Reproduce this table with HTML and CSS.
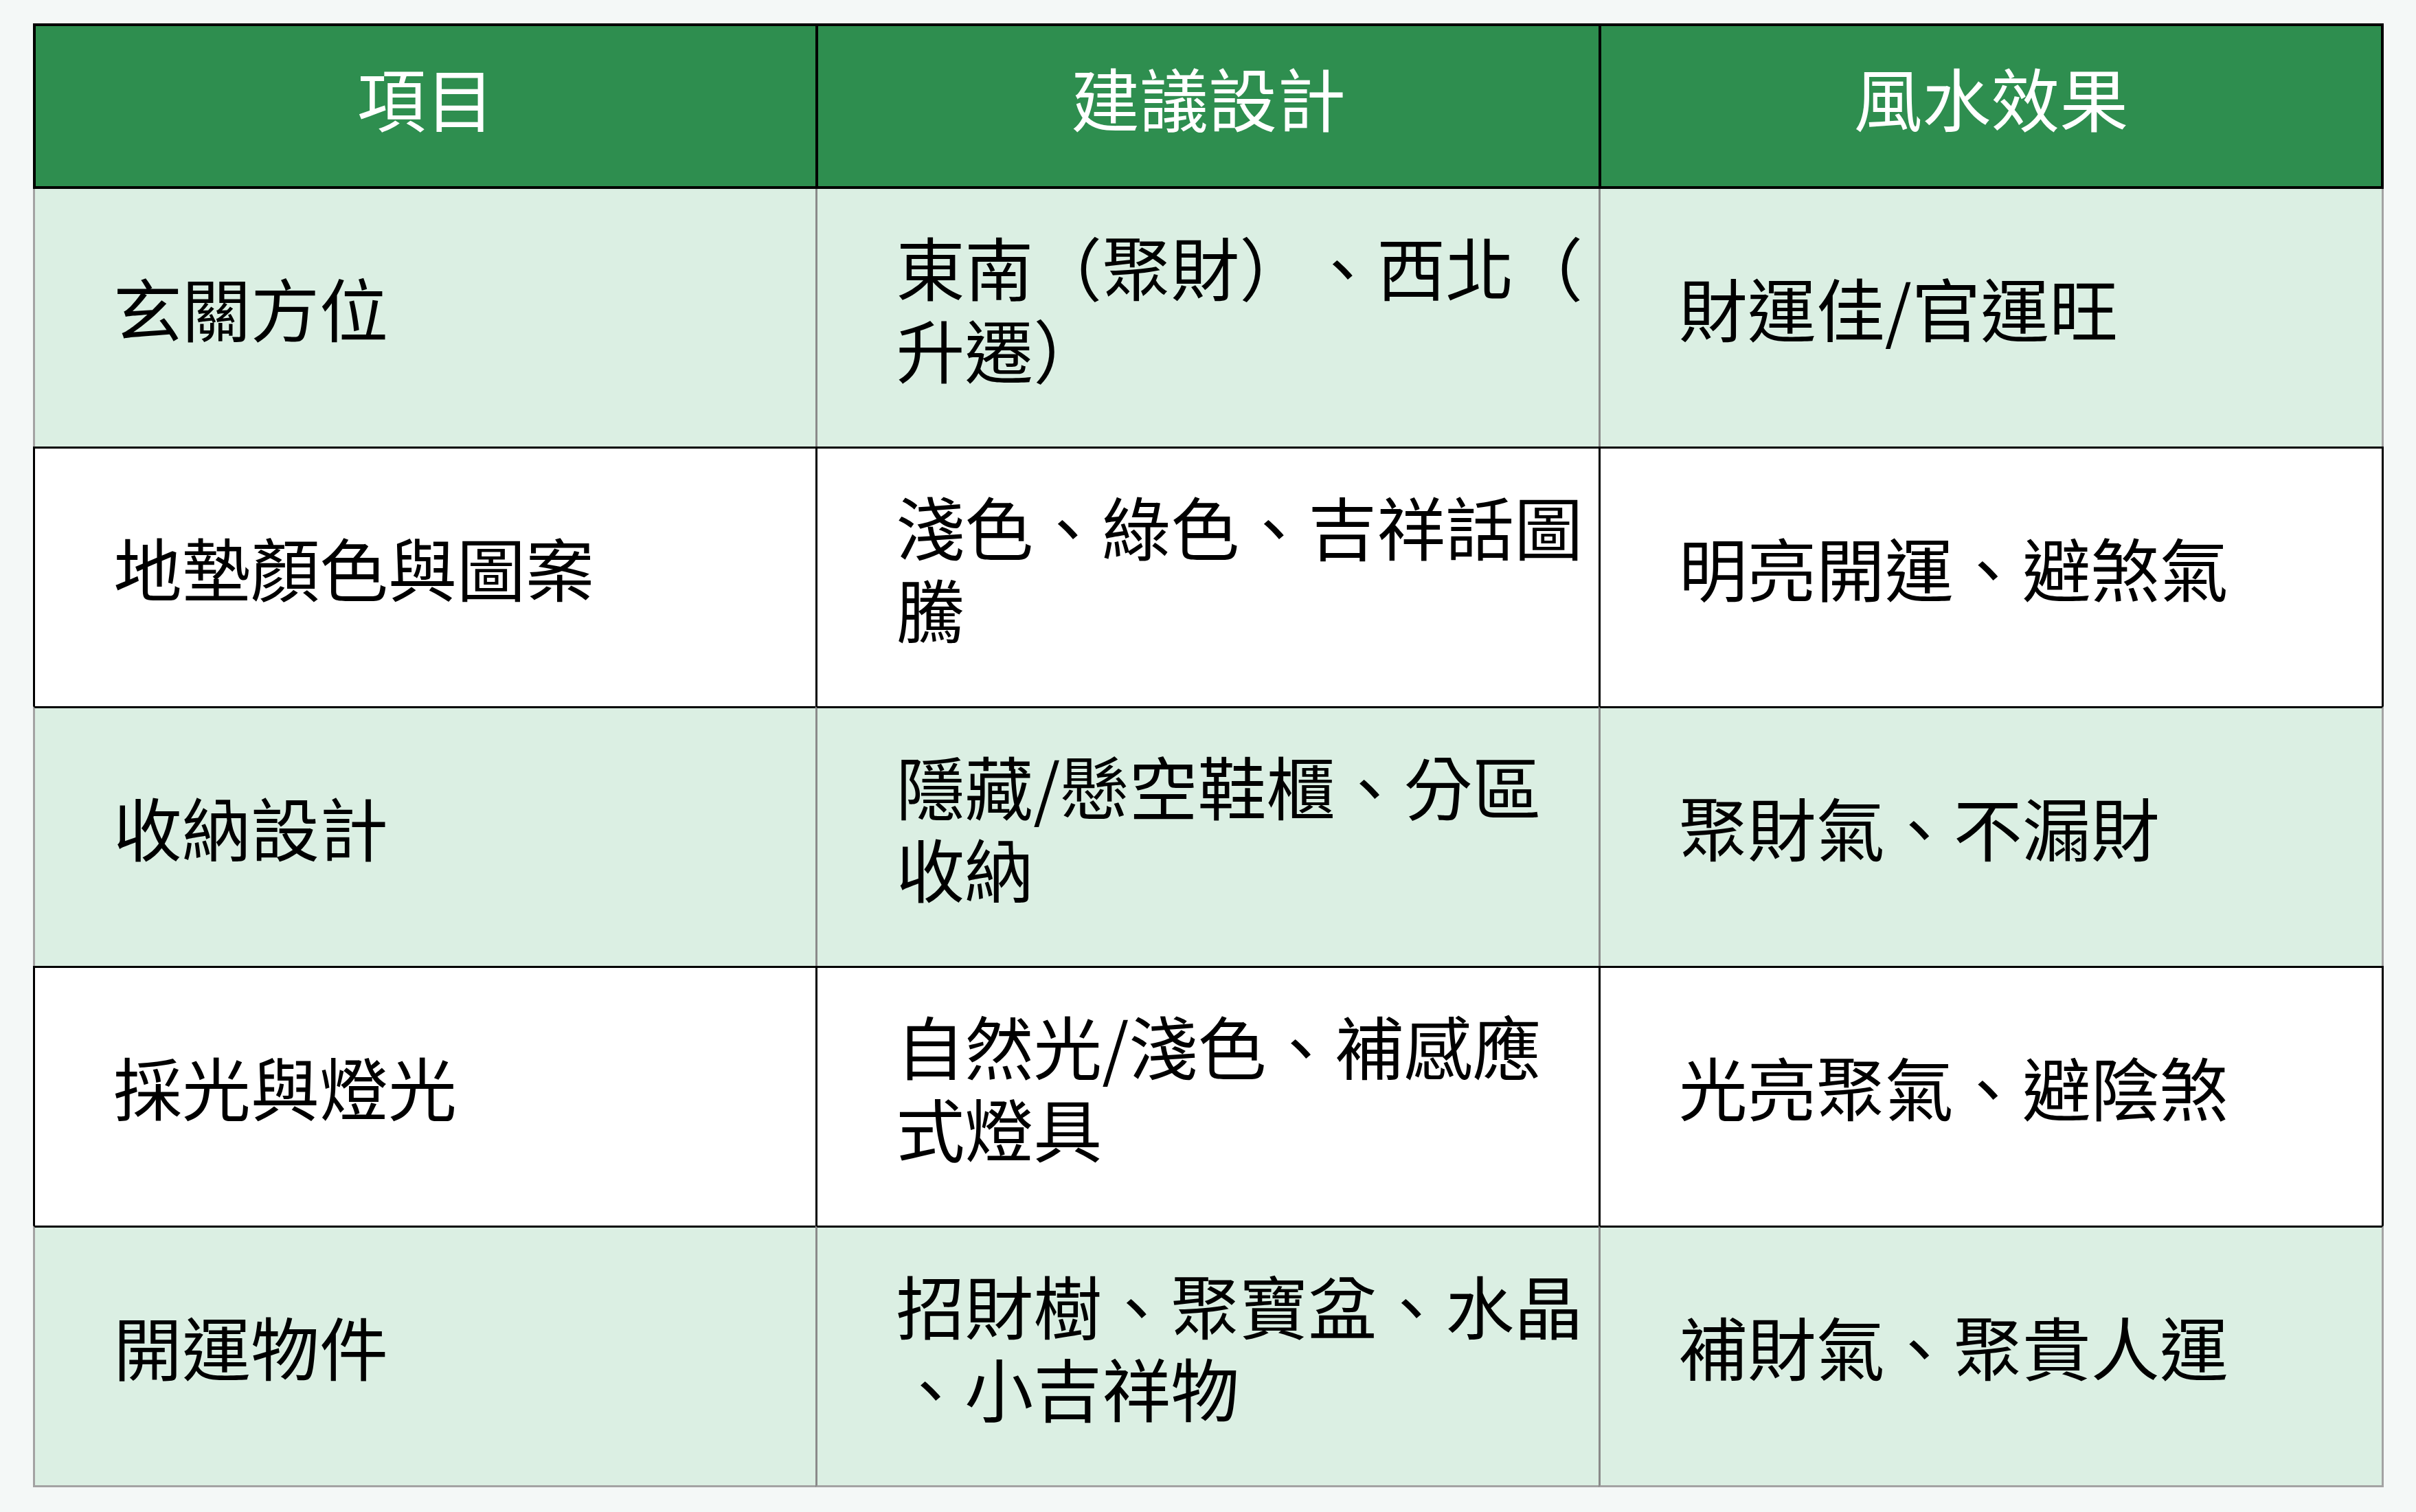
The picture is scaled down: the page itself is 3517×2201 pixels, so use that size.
FILE: index.html
```html
<!DOCTYPE html>
<html lang="zh-Hant">
<head>
<meta charset="utf-8">
<title>玄關風水建議</title>
<link rel="stylesheet" href="styles.css">
</head>
<body>
<main class="page">
  <table class="fs-table">
    <thead>
      <tr>
        <th>項目</th>
        <th>建議設計</th>
        <th>風水效果</th>
      </tr>
    </thead>
    <tbody>
      <tr class="row-alt">
        <td>玄關方位</td>
        <td class="wrap">東南（聚財）、西北（升遷）</td>
        <td>財運佳/官運旺</td>
      </tr>
      <tr class="row-plain">
        <td>地墊顏色與圖案</td>
        <td class="wrap">淺色、綠色、吉祥話圖騰</td>
        <td>明亮開運、避煞氣</td>
      </tr>
      <tr class="row-alt">
        <td>收納設計</td>
        <td class="wrap">隱藏/懸空鞋櫃、分區收納</td>
        <td>聚財氣、不漏財</td>
      </tr>
      <tr class="row-plain">
        <td>採光與燈光</td>
        <td class="wrap">自然光/淺色、補感應式燈具</td>
        <td>光亮聚氣、避陰煞</td>
      </tr>
      <tr class="row-alt row-last">
        <td>開運物件</td>
        <td class="wrap">招財樹、聚寶盆、水晶、小吉祥物</td>
        <td>補財氣、聚貴人運</td>
      </tr>
    </tbody>
  </table>
</main>
</body>
</html>
```

FILE: styles.css
```css
html, body {
  margin: 0;
  padding: 0;
  background: #f4f8f7;
}

.page {
  padding: 34px 47px 36px 48px;
}

.fs-table {
  width: 3422px;
  table-layout: fixed;
  border-collapse: separate;
  border-spacing: 0;
  font-family: "Noto Sans CJK TC", "Noto Sans", sans-serif;
  font-size: 100px;
  line-height: 1.2;
  color: #000;
  text-spacing-trim: space-all;
}

.fs-table th {
  width: 33.333%;
  background: #2e8e4f;
  color: #fff;
  font-weight: 400;
  text-align: center;
  padding: 43px 16px 70px 16px;
  border-top: 4px solid #000;
  border-left: 4px solid #000;
  border-bottom: 4px solid #000;
}

.fs-table th:last-child {
  border-right: 4px solid #000;
}

.fs-table td {
  text-align: left;
  vertical-align: middle;
  padding: 52px 16px 83px 114px;
  border-top: 3px solid #000;
  border-left: 3px solid #000;
}

.fs-table td:last-child {
  border-right: 3px solid #000;
}

.fs-table tbody tr:first-child td {
  border-top: 0;
}

.row-alt td {
  background: #dbefe3;
  border-left-color: #8a8a8a;
}

.row-alt td:first-child {
  border-left-color: #a3a3a3;
}

.row-alt td:last-child {
  border-right-color: #a3a3a3;
}

.row-plain td {
  background: #fff;
}

.row-last td {
  border-bottom: 3px solid #a3a3a3;
}

.wrap {
  line-break: anywhere;
  word-break: break-all;
}
```
